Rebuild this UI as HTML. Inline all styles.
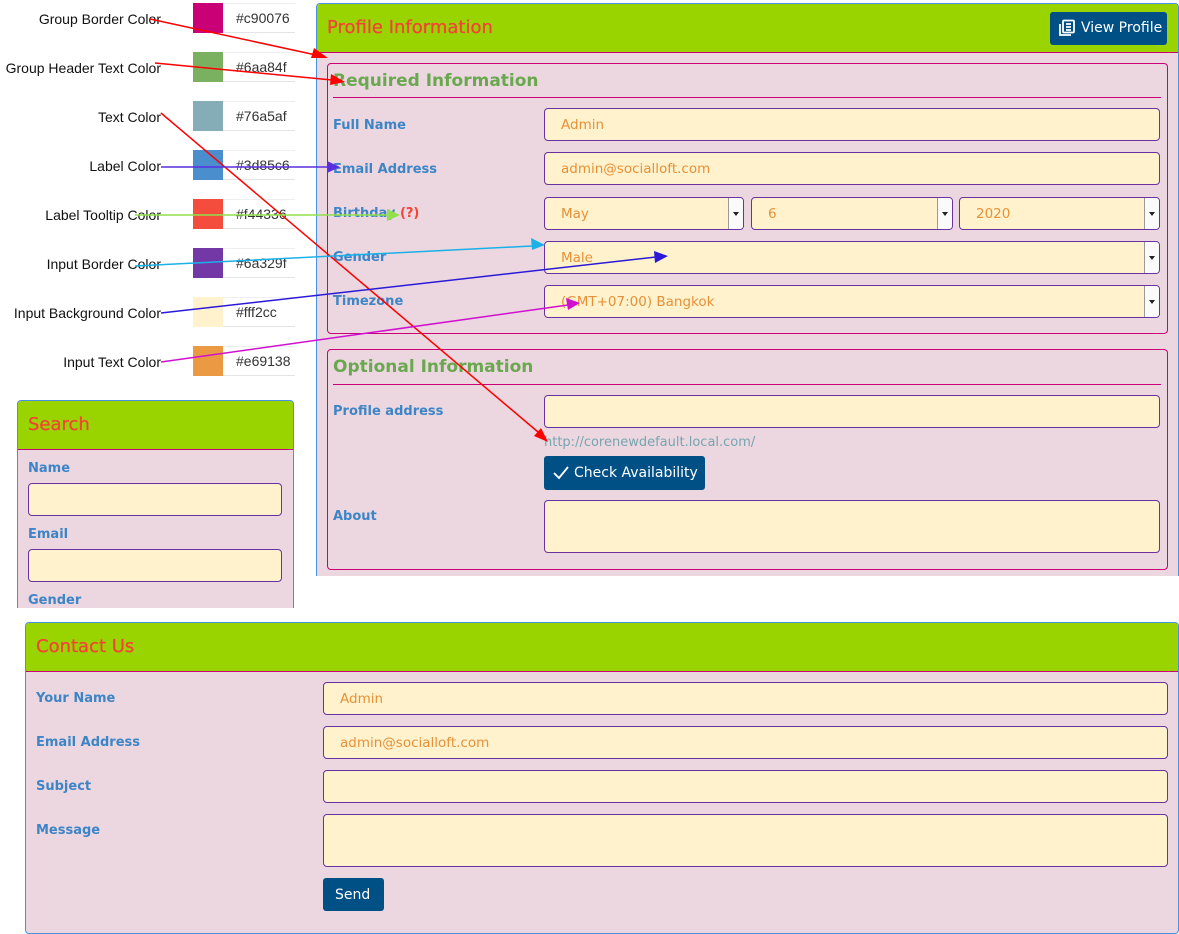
<!DOCTYPE html>
<html><head><meta charset="utf-8"><style>
*{box-sizing:border-box;margin:0;padding:0}
body{width:1179px;height:934px;background:#fff;position:relative;overflow:hidden;font-family:"DejaVu Sans","Liberation Sans",sans-serif}
.a{position:absolute}
.lg{font-family:"Liberation Sans",sans-serif;font-size:14px;color:#111;right:1018px;text-align:right;white-space:nowrap}
.sw{left:193px;width:30px;height:30px}
.hx{left:223px;width:72px;height:30px;border-bottom:1px solid #e4e4e4;border-top:1px solid #eee;font-family:"Liberation Sans",sans-serif;font-size:14px;color:#333;padding:6px 0 0 13px}
.panel{background:#ecd7e0;border:1px solid #4a90e2;border-radius:4px 4px 0 0}
.hd{position:absolute;left:0;right:0;top:0;height:49px;background:#9ad400;border-bottom:1px solid #c90076;border-radius:3px 3px 0 0}
.ht{position:absolute;left:10px;top:13px;color:#f44336;font-size:18px;-webkit-text-stroke:0.3px #f44336}
.grp{border:1px solid #c90076;border-radius:4px}
.leg{color:#6aa84f;font-size:17px;font-weight:bold}
.line{height:1px;background:#c90076}
.lb{color:#3d85c6;font-size:13px;font-weight:bold}
.in{background:#fff2cc;border:1px solid #6a329f;border-radius:4px;color:#e69138;font-size:13.5px;padding:8px 0 0 16px}
.sel::after{content:"";position:absolute;right:0;top:0;bottom:0;width:14px;border-left:1px solid #999;background:#fafafa;border-radius:0 3px 3px 0}
.sel::before{content:"";position:absolute;right:4px;top:14px;border:3px solid transparent;border-top:4px solid #222;z-index:2}
.btn{background:#005085;color:#fff;border-radius:3px;font-size:13.5px}
</style></head><body>

<div class="a lg" style="top:11px">Group Border Color</div>
<div class="a lg" style="top:60px">Group Header Text Color</div>
<div class="a lg" style="top:109px">Text Color</div>
<div class="a lg" style="top:158px">Label Color</div>
<div class="a lg" style="top:207px">Label Tooltip Color</div>
<div class="a lg" style="top:256px">Input Border Color</div>
<div class="a lg" style="top:305px">Input Background Color</div>
<div class="a lg" style="top:354px">Input Text Color</div>

<div class="a sw" style="top:3px;background:#c90076"></div><div class="a hx" style="top:3px">#c90076</div>
<div class="a sw" style="top:52px;background:#6aa84f;opacity:.9"></div><div class="a hx" style="top:52px">#6aa84f</div>
<div class="a sw" style="top:101px;background:#84adb8"></div><div class="a hx" style="top:101px">#76a5af</div>
<div class="a sw" style="top:150px;background:#4a8ecd"></div><div class="a hx" style="top:150px">#3d85c6</div>
<div class="a sw" style="top:199px;background:#f44d3e"></div><div class="a hx" style="top:199px">#f44336</div>
<div class="a sw" style="top:248px;background:#7338a6"></div><div class="a hx" style="top:248px">#6a329f</div>
<div class="a sw" style="top:297px;background:#fff2cc"></div><div class="a hx" style="top:297px">#fff2cc</div>
<div class="a sw" style="top:346px;background:#eb9a43"></div><div class="a hx" style="top:346px">#e69138</div>

<div class="a panel" style="left:316px;top:3px;width:863px;height:573px;border-bottom:none">
  <div class="hd"><div class="ht">Profile Information</div>
    <div class="a btn" style="left:733px;top:8px;width:117px;height:33px;padding:8px 0 0 31px;font-size:14px">View Profile
      <svg class="a" style="left:8px;top:7px" width="18" height="18" viewBox="0 0 18 18" fill="none" stroke="#fff" stroke-width="1.8"><rect x="5" y="1.5" width="11" height="12" rx="1"/><path d="M2 5v11h11M8 5h5M8 8h5M8 11h5"/></svg>
    </div>
  </div>
</div>
<div class="a grp" style="left:327px;top:63px;width:841px;height:271px"></div>
<div class="a leg" style="left:333px;top:71px">Required Information</div>
<div class="a line" style="left:333px;top:97px;width:828px"></div>
<div class="a lb" style="left:333px;top:118px">Full Name</div>
<div class="a in" style="left:544px;top:108px;width:616px;height:33px">Admin</div>
<div class="a lb" style="left:333px;top:162px">Email Address</div>
<div class="a in" style="left:544px;top:152px;width:616px;height:33px">admin@socialloft.com</div>
<div class="a lb" style="left:333px;top:206px">Birthday <span style="color:#f44336">(?)</span></div>
<div class="a in sel" style="left:544px;top:197px;width:200px;height:33px">May</div>
<div class="a in sel" style="left:751px;top:197px;width:202px;height:33px">6</div>
<div class="a in sel" style="left:959px;top:197px;width:201px;height:33px">2020</div>
<div class="a lb" style="left:333px;top:250px">Gender</div>
<div class="a in sel" style="left:544px;top:241px;width:616px;height:33px">Male</div>
<div class="a lb" style="left:333px;top:294px">Timezone</div>
<div class="a in sel" style="left:544px;top:285px;width:616px;height:33px">(GMT+07:00) Bangkok</div>

<div class="a grp" style="left:327px;top:349px;width:841px;height:221px"></div>
<div class="a leg" style="left:333px;top:357px">Optional Information</div>
<div class="a line" style="left:333px;top:384px;width:828px"></div>
<div class="a lb" style="left:333px;top:404px">Profile address</div>
<div class="a in" style="left:544px;top:395px;width:616px;height:33px"></div>
<div class="a" style="left:544px;top:435px;color:#76a5af;font-size:13px">http://corenewdefault.local.com/</div>
<div class="a btn" style="left:544px;top:456px;width:161px;height:34px;padding:9px 0 0 30px;font-size:14px">Check Availability
  <svg class="a" style="left:9px;top:10px" width="16" height="14" viewBox="0 0 16 14" fill="none" stroke="#fff" stroke-width="1.8"><path d="M1 7l5 5L15 1"/></svg></div>
<div class="a lb" style="left:333px;top:509px">About</div>
<div class="a in" style="left:544px;top:500px;width:616px;height:53px"></div>

<div class="a panel" style="left:17px;top:400px;width:277px;height:208px;border-bottom:none">
  <div class="hd"><div class="ht">Search</div></div>
</div>
<div class="a lb" style="left:28px;top:461px">Name</div>
<div class="a in" style="left:28px;top:483px;width:254px;height:33px"></div>
<div class="a lb" style="left:28px;top:527px">Email</div>
<div class="a in" style="left:28px;top:549px;width:254px;height:33px"></div>
<div class="a lb" style="left:28px;top:593px">Gender</div>

<div class="a panel" style="left:25px;top:622px;width:1154px;height:312px;border-radius:4px">
  <div class="hd"><div class="ht">Contact Us</div></div>
</div>
<div class="a lb" style="left:36px;top:691px">Your Name</div>
<div class="a in" style="left:323px;top:682px;width:845px;height:33px">Admin</div>
<div class="a lb" style="left:36px;top:735px">Email Address</div>
<div class="a in" style="left:323px;top:726px;width:845px;height:33px">admin@socialloft.com</div>
<div class="a lb" style="left:36px;top:779px">Subject</div>
<div class="a in" style="left:323px;top:770px;width:845px;height:33px"></div>
<div class="a lb" style="left:36px;top:823px">Message</div>
<div class="a in" style="left:323px;top:814px;width:845px;height:53px"></div>
<div class="a btn" style="left:323px;top:878px;width:61px;height:33px;padding:9px 0 0 12px;font-size:14px">Send</div>

<svg class="a" style="left:0;top:0" width="1179" height="934">
<g stroke-width="1.5" fill="none">
<line x1="150" y1="19" x2="316" y2="55" stroke="#f00"/><path d="M328 58l-14-10-3 10z" fill="#f00"/>
<line x1="155" y1="63" x2="332" y2="80" stroke="#f00"/><path d="M345 82l-14-8-1 11z" fill="#f00"/>
<line x1="161" y1="113" x2="538" y2="432" stroke="#f00"/><path d="M548 442l-7-14-7 8z" fill="#f00"/>
<line x1="161" y1="167" x2="328" y2="167" stroke="#5a2ee0"/><path d="M340 167l-13-6v12z" fill="#5a2ee0"/>
<line x1="135" y1="215" x2="388" y2="215" stroke="#8fe04a"/><path d="M400 215l-13-6v12z" fill="#8fe04a"/>
<line x1="135" y1="266" x2="532" y2="246" stroke="#1ab0e8"/><path d="M545 245l-14-7 1 12z" fill="#1ab0e8"/>
<line x1="161" y1="313" x2="656" y2="257" stroke="#2a1ad8"/><path d="M668 256l-14-5 1 12z" fill="#2a1ad8"/>
<line x1="161" y1="362" x2="568" y2="305" stroke="#d010d0"/><path d="M580 303l-14-5 2 12z" fill="#d010d0"/>
</g>
</svg>
</body></html>
